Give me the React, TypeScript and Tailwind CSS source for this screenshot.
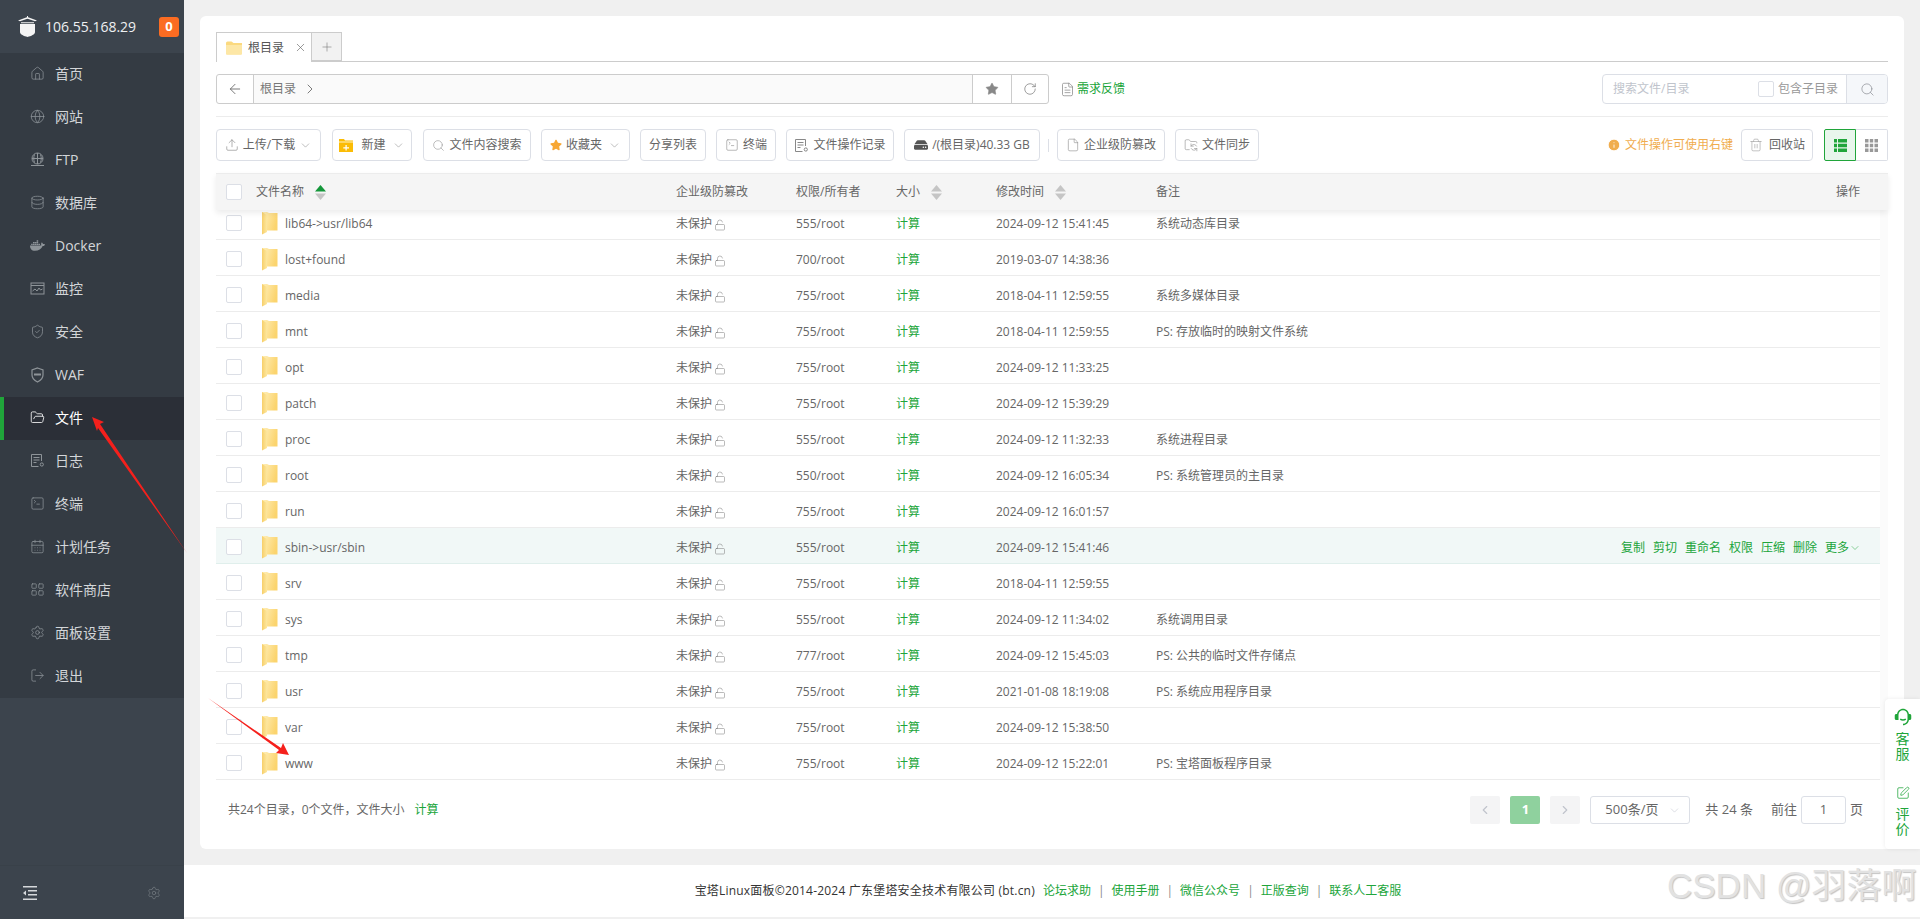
import React from "react";
import {
  ArrowLeft, ChevronRight, ChevronLeft, ChevronDown, Database, File, FileText, FolderOpen, Globe, Home, LayoutGrid, LogOut, Plus, RotateCw,
  Search, Settings, ShieldCheck, Star, Trash2, Upload, X, SquarePen, Info, SquareTerminal, CalendarDays, LockOpen, FolderSync,
} from "lucide-react";
import { FaDocker, FaHdd, FaStar } from "react-icons/fa";
import { RiCustomerService2Fill } from "react-icons/ri";

const font = { fontFamily: '"Open Sans","Noto Sans CJK SC",sans-serif' };

function MonitorIcon() {
  return (
    <svg width="15" height="15" viewBox="0 0 15 15" fill="none" stroke="currentColor" strokeWidth="1">
      <rect x="1" y="2" width="13" height="11" />
      <path d="M1 4.5h13M2.5 10l2.5-2 2 2 2-3 1.500 2 2-1" />
    </svg>
  );
}
function FtpIcon() {
  return (
    <svg width="15" height="15" viewBox="0 0 15 15" fill="none" stroke="currentColor" strokeWidth="1">
      <circle cx="7.500" cy="6.500" r="5.500" />
      <path d="M2 6.500h11M7.500 1v11M4.500 2.500c-1 2.500-1 5.500 0 8M10.500 2.500c1 2.500 1 5.500 0 8M1 13.500h13" />
    </svg>
  );
}
function WafIcon() {
  return (
    <svg width="15" height="16" viewBox="0 0 15 16" fill="none" stroke="currentColor" strokeWidth="1.200">
      <path d="M7.500 1l5.500 2v5c0 3.500-2.500 5.500-5.500 7-3-1.500-5.500-3.500-5.500-7V3z" />
      <path d="M4 6.500h7v2H4z" fill="currentColor" stroke="none" />
    </svg>
  );
}
function LogIcon() {
  return (
    <svg width="15" height="15" viewBox="0 0 15 15" fill="none" stroke="currentColor" strokeWidth="1">
      <path d="M11.500 8V1.500h-10v12h7M3.500 4.500h6M3.500 7h6M3.500 9.500h3" />
      <circle cx="11.800" cy="11.500" r="1.600" />
    </svg>
  );
}
function CollapseIcon() {
  return (
    <svg width="14" height="14" viewBox="0 0 14 14" fill="#d5d8db">
      <path d="M0 0h14v1.500H0zM5 4h9v1.500H5zM5 8h9v1.500H5zM0 12.500h14V14H0zM3 4.500v5L0 7z" />
    </svg>
  );
}
function LogoIcon() {
  return (
    <svg width="19" height="21" viewBox="0 0 19 21" fill="#f4f4f4">
      <path d="M2 8h15v8c0 2.500-4 4-7.500 5C6 20 2 18.500 2 16z" />
      <path d="M0 4.500L9.500 1 19 4.500l-2 .7-7.500-2.500L2 5.200zM3 6.200h13v1H3zM9 0h1v2H9z" />
    </svg>
  );
}
function FolderTall() {
  return (
    <svg width="17" height="24" viewBox="0 0 17 24" className="shrink-0 -mt-[3px]">
      <defs>
        <linearGradient id="fa" x1="0" y1="0" x2="1" y2="0.3">
          <stop offset="0" stopColor="#fff0bd" />
          <stop offset="1" stopColor="#fbd46e" />
        </linearGradient>
        <linearGradient id="fb" x1="0" y1="0" x2="1" y2="0">
          <stop offset="0" stopColor="#f7cf6a" />
          <stop offset="1" stopColor="#fde79f" />
        </linearGradient>
      </defs>
      <path d="M1 1h5l2 1h8.500v17.500H1z" fill="url(#fa)" />
      <path d="M1 1l5 3v17l-5 2.500z" fill="url(#fb)" />
    </svg>
  );
}
function FolderFlat() {
  return (
    <svg width="16" height="14" viewBox="0 0 16 14">
      <path d="M0 2a1.500 1.500 0 0 1 1.500-1.500h4L7.500 2H16v10.500a1 1 0 0 1-1 1H1a1 1 0 0 1-1-1z" fill="#fbd97f" />
      <path d="M0 4h16v8.500a1 1 0 0 1-1 1H1a1 1 0 0 1-1-1z" fill="#fde7a6" />
    </svg>
  );
}
function NewFolderIcon() {
  return (
    <svg width="14" height="13" viewBox="0 0 14 13">
      <path d="M0 0h5l1 1.500h8V13H0z" fill="#fbbc05" />
      <path d="M0 2.500h14v1H0z" fill="#fff3c4" />
      <path d="M6.500 6h1.200v2.200H10v1.200H7.700v2.200H6.500V9.400H4.300V8.200h2.200z" fill="#fff" />
    </svg>
  );
}
function Sort({ active }: { active?: boolean }) {
  return (
    <svg width="11" height="15" viewBox="0 0 11 15" className="shrink-0">
      <path d="M5.500 0L11 6.500H0z" fill={active ? "#14973a" : "#c5c5c5"} />
      <path d="M5.500 15L11 8.500H0z" fill="#c5c5c5" />
    </svg>
  );
}
function ListViewIcon({ color }: { color: string }) {
  return (
    <svg width="13" height="13" viewBox="0 0 13 13" fill={color}>
      <path d="M0 0h3v3.500H0zM4 0h9v3.500H4zM0 4.800h3v3.400H0zM4 4.800h9v3.400H4zM0 9.500h3V13H0zM4 9.500h9V13H4z" />
    </svg>
  );
}
function GridViewIcon() {
  return (
    <svg width="13" height="13" viewBox="0 0 13 13" fill="#999">
      <path d="M0 0h3.500v3.500H0zM4.800 0h3.400v3.500H4.800zM9.500 0H13v3.500H9.500zM0 4.800h3.500v3.400H0zM4.800 4.800h3.400v3.400H4.800zM9.500 4.800H13v3.400H9.500zM0 9.500h3.500V13H0zM4.800 9.500h3.400V13H4.800zM9.500 9.500H13V13H9.500z" />
    </svg>
  );
}

const menu: { label: string; icon: React.ReactNode; active?: boolean }[] = [
  { label: "首页", icon: <Home size={15} strokeWidth={1.2} /> },
  { label: "网站", icon: <Globe size={15} strokeWidth={1.2} /> },
  { label: "FTP", icon: <FtpIcon /> },
  { label: "数据库", icon: <Database size={15} strokeWidth={1.2} /> },
  { label: "Docker", icon: <FaDocker size={15} /> },
  { label: "监控", icon: <MonitorIcon /> },
  { label: "安全", icon: <ShieldCheck size={15} strokeWidth={1.2} /> },
  { label: "WAF", icon: <WafIcon /> },
  { label: "文件", icon: <FolderOpen size={15} strokeWidth={1.3} />, active: true },
  { label: "日志", icon: <LogIcon /> },
  { label: "终端", icon: <SquareTerminal size={15} strokeWidth={1.2} /> },
  { label: "计划任务", icon: <CalendarDays size={15} strokeWidth={1.2} /> },
  { label: "软件商店", icon: <LayoutGrid size={15} strokeWidth={1.2} /> },
  { label: "面板设置", icon: <Settings size={15} strokeWidth={1.2} /> },
  { label: "退出", icon: <LogOut size={15} strokeWidth={1.2} /> },
];

const rows = [
  ["lib64->usr/lib64", "555/root", "2024-09-12 15:41:45", "系统动态库目录"],
  ["lost+found", "700/root", "2019-03-07 14:38:36", ""],
  ["media", "755/root", "2018-04-11 12:59:55", "系统多媒体目录"],
  ["mnt", "755/root", "2018-04-11 12:59:55", "PS: 存放临时的映射文件系统"],
  ["opt", "755/root", "2024-09-12 11:33:25", ""],
  ["patch", "755/root", "2024-09-12 15:39:29", ""],
  ["proc", "555/root", "2024-09-12 11:32:33", "系统进程目录"],
  ["root", "550/root", "2024-09-12 16:05:34", "PS: 系统管理员的主目录"],
  ["run", "755/root", "2024-09-12 16:01:57", ""],
  ["sbin->usr/sbin", "555/root", "2024-09-12 15:41:46", ""],
  ["srv", "755/root", "2018-04-11 12:59:55", ""],
  ["sys", "555/root", "2024-09-12 11:34:02", "系统调用目录"],
  ["tmp", "777/root", "2024-09-12 15:45:03", "PS: 公共的临时文件存储点"],
  ["usr", "755/root", "2021-01-08 18:19:08", "PS: 系统应用程序目录"],
  ["var", "755/root", "2024-09-12 15:38:50", ""],
  ["www", "755/root", "2024-09-12 15:22:01", "PS: 宝塔面板程序目录"],
];

function Check() {
  return <span className="block w-[16px] h-[16px] rounded-[2px] border border-[#dcdfe6] bg-white shrink-0" />;
}

function Btn({ w, children }: { w: string; children: React.ReactNode }) {
  return (
    <div className={"h-[32px] shrink-0 flex items-center justify-center gap-[4px] rounded-[4px] border border-[#dcdfe6] bg-white text-[12px] text-[#666] " + w}>
      {children}
    </div>
  );
}

export default function App() {
  return (
    <div className="relative w-[1920px] h-[919px] overflow-hidden flex bg-[#f0f0f0]" style={font}>
      <aside className="w-[184px] h-full shrink-0 flex flex-col bg-[#3c444d]">
        <div className="h-[53px] flex items-center pl-[18px] pr-[5px]">
          <LogoIcon />
          <span className="ml-[8px] text-[14px] text-[#eef0f1]">106.55.168.29</span>
          <span className="ml-auto w-[20px] h-[20px] rounded-[3px] bg-[#fb6c22] text-white font-bold text-[13px] flex items-center justify-center">0</span>
        </div>
        <nav className="bg-[#343b43]">
          {menu.map((m) => (
            <div key={m.label} className={m.active ? "h-[43px] pb-[2px] flex items-center gap-[10px] pl-[26px] border-l-4 border-[#20a53a] bg-[#2b2f37] text-white text-[14px]" : "h-[43px] pb-[2px] flex items-center gap-[10px] pl-[30px] text-[#d3d6d9] text-[14px]"}>
              <span className={m.active ? "w-[15px] flex justify-center text-white" : "w-[15px] flex justify-center text-[#8e9499]"}>{m.icon}</span>
              <span>{m.label}</span>
            </div>
          ))}
        </nav>
        <div className="mt-auto h-[54px] flex items-center justify-between pl-[23px] pr-[23px] border-t border-[#394149]">
          <CollapseIcon />
          <Settings size={14} strokeWidth={1.2} className="text-[#767c82]" />
        </div>
      </aside>

      <main className="flex-1 flex flex-col min-w-0">
        <div className="mx-[16px] mt-[16px] h-[833px] rounded-[6px] bg-white px-[16px] pt-[16px] flex flex-col">
          <div className="h-[30px] border-b border-[#cccccc] flex shrink-0">
            <div className="w-[96px] h-[30px] border border-b-0 border-[#cccccc] bg-white flex items-center pl-[9px] text-[12px] text-[#555]">
              <FolderFlat />
              <span className="ml-[6px]">根目录</span>
              <X size={13} strokeWidth={1.2} className="ml-[10px] text-[#666]" />
            </div>
            <div className="w-[30px] h-[29px] border border-l-0 border-[#cccccc] bg-[#f2f2f2] flex items-center justify-center text-[#777]">
              <Plus size={14} strokeWidth={1} />
            </div>
          </div>

          <div className="mt-[12px] h-[30px] flex shrink-0 items-center">
            <div className="w-[833px] h-[30px] flex rounded-[3px] border border-[#cccccc] overflow-hidden">
              <div className="w-[37px] flex items-center justify-center border-r border-[#cccccc] text-[#666]"><ArrowLeft size={16} strokeWidth={1.3} /></div>
              <div className="flex-1 bg-[#fafafa] flex items-center pl-[6px] text-[12px] text-[#777]">
                <span>根目录</span>
                <ChevronRight size={16} strokeWidth={1.3} className="ml-[6px] text-[#666]" />
              </div>
              <div className="w-[39px] flex items-center justify-center border-l border-[#cccccc] text-[#888]"><Star size={14} fill="#888" strokeWidth={1} /></div>
              <div className="w-[37px] flex items-center justify-center border-l border-[#cccccc] text-[#777]"><RotateCw size={14} strokeWidth={1.2} /></div>
            </div>
            <FileText size={15} strokeWidth={1.2} className="ml-[11px] text-[#888]" />
            <span className="ml-[2px] text-[12px] text-[#20a53a]">需求反馈</span>
            <div className="ml-auto w-[286px] h-[30px] flex rounded-[4px] border border-[#dcdfe6] overflow-hidden">
              <div className="flex-1 flex items-center pl-[10px] text-[12px] text-[#c0c4cc]">
                <span>搜索文件/目录</span>
                <span className="ml-auto"><Check /></span>
                <span className="ml-[4px] mr-[8px] text-[#999]">包含子目录</span>
              </div>
              <div className="w-[41px] bg-[#f5f7fa] border-l border-[#dcdfe6] flex items-center justify-center text-[#909399]"><Search size={15} strokeWidth={1.2} /></div>
            </div>
          </div>

          <div className="mt-[12px] border-t border-[#ececec] shrink-0" />

          <div className="mt-[12px] h-[32px] flex items-center shrink-0">
            <Btn w="w-[105px]"><Upload size={14} strokeWidth={1.1} className="text-[#888]" /><span>上传/下载</span><ChevronDown size={13} strokeWidth={1} className="text-[#888]" /></Btn>
            <div className="ml-[11px]"><Btn w="w-[80px]"><NewFolderIcon /><span className="ml-[4px]">新建</span><ChevronDown size={13} strokeWidth={1} className="ml-[2px] text-[#888]" /></Btn></div>
            <div className="ml-[11px]"><Btn w="w-[108px]"><Search size={13} strokeWidth={1} className="text-[#888]" /><span>文件内容搜索</span></Btn></div>
            <div className="ml-[10px]"><Btn w="w-[89px]"><FaStar size={12} className="text-[#f7a733]" /><span>收藏夹</span><ChevronDown size={13} strokeWidth={1} className="ml-[2px] text-[#888]" /></Btn></div>
            <div className="ml-[10px]"><Btn w="w-[66px]"><span>分享列表</span></Btn></div>
            <div className="ml-[10px]"><Btn w="w-[60px]"><SquareTerminal size={14} strokeWidth={1} className="text-[#888]" /><span>终端</span></Btn></div>
            <div className="ml-[10px]"><Btn w="w-[108px]"><span className="text-[#888]"><LogIcon /></span><span>文件操作记录</span></Btn></div>
            <div className="ml-[10px]"><Btn w="w-[136px]"><FaHdd size={14} className="text-[#555]" /><span>/(根目录)40.33 GB</span></Btn></div>
            <div className="ml-[8px] mr-[8px] w-px h-[13px] bg-[#dcdfe6]" />
            <Btn w="w-[108px]"><File size={14} strokeWidth={1} className="text-[#888]" /><span>企业级防篡改</span></Btn>
            <div className="ml-[10px]"><Btn w="w-[84px]"><FolderSync size={14} strokeWidth={1} className="text-[#888]" /><span>文件同步</span></Btn></div>
            <div className="ml-auto flex items-center gap-[4px] text-[12px] text-[#f0ad4e]">
              <Info size={14} fill="#f0ad4e" stroke="#fff" strokeWidth={1.5} />
              <span>文件操作可使用右键</span>
            </div>
            <div className="ml-[8px]"><Btn w="w-[72px]"><Trash2 size={14} strokeWidth={1} className="text-[#999]" /><span className="ml-[2px]">回收站</span></Btn></div>
            <div className="ml-[11px] w-[32px] h-[32px] flex items-center justify-center rounded-l-[2px] border border-[#20a53a] bg-[#e8f6ec]"><ListViewIcon color="#20a53a" /></div>
            <div className="w-[32px] h-[32px] flex items-center justify-center rounded-r-[2px] border border-l-0 border-[#dcdfe6]"><GridViewIcon /></div>
          </div>

          <div className="mt-[12px] relative z-10 h-[37px] shrink-0 bg-[#f5f5f5] border-t border-[#ececec] shadow-[0_3px_6px_rgba(0,0,0,0.08)] grid grid-cols-[45px_415px_120px_100px_100px_160px_1fr] items-center text-[12px] text-[#666]">
            <div className="pl-[10px]"><Check /></div>
            <div className="-ml-[5px] flex items-center gap-[11px]"><span>文件名称</span><Sort active /></div>
            <div>企业级防篡改</div>
            <div>权限/所有者</div>
            <div className="flex items-center gap-[11px]"><span>大小</span><Sort /></div>
            <div className="flex items-center gap-[11px]"><span>修改时间</span><Sort /></div>
            <div className="flex justify-between pr-[28px]"><span>备注</span><span>操作</span></div>
          </div>

          <div className="h-[570px] shrink-0 overflow-hidden bg-[#fbfbfb]">
            <div className="w-[1664px] -mt-[6px] bg-white">
              {rows.map((r) => {
                const hover = r[0].startsWith("sbin");
                return (
                  <div key={r[0]} className={hover ? "h-[36px] pt-[5px] border-b border-[#e0efec] bg-[#f1f8f7] grid grid-cols-[45px_415px_120px_100px_100px_160px_1fr] items-center text-[12px] text-[#666]" : "h-[36px] pt-[5px] border-b border-[#ececec] grid grid-cols-[45px_415px_120px_100px_100px_160px_1fr] items-center text-[12px] text-[#666]"}>
                    <div className="pl-[10px] -mt-[3px]"><Check /></div>
                    <div className="flex items-center gap-[7px]"><FolderTall /><span>{r[0]}</span></div>
                    <div className="flex items-center gap-[2px]"><span>未保护</span><LockOpen size={12} strokeWidth={1} className="text-[#777] mt-[2px]" /></div>
                    <div>{r[1]}</div>
                    <div className="text-[#20a53a]">计算</div>
                    <div>{r[2]}</div>
                    <div className="flex justify-between pr-[19px]">
                      <span>{r[3]}</span>
                      {hover && (
                        <span className="flex items-center gap-[8px] text-[#20a53a]">
                          <span>复制</span><span>剪切</span><span>重命名</span><span>权限</span><span>压缩</span><span>删除</span>
                          <span className="flex items-center">更多<ChevronDown size={12} strokeWidth={1} /></span>
                        </span>
                      )}
                    </div>
                  </div>
                );
              })}
            </div>
          </div>

          <div className="flex items-center h-[60px] shrink-0 text-[12px] text-[#666] pl-[12px] pr-[25px]">
            <div>共24个目录，0个文件，文件大小</div>
            <div className="ml-[10px] text-[#20a53a]">计算</div>
            <div className="ml-auto flex items-center">
              <div className="w-[30px] h-[28px] rounded-[2px] bg-[#f4f4f5] flex items-center justify-center text-[#c0c4cc]"><ChevronLeft size={14} strokeWidth={2} /></div>
              <div className="ml-[10px] w-[30px] h-[28px] rounded-[2px] bg-[#8fd19e] flex items-center justify-center text-white font-bold text-[13px]">1</div>
              <div className="ml-[10px] w-[30px] h-[28px] rounded-[2px] bg-[#f4f4f5] flex items-center justify-center text-[#c0c4cc]"><ChevronRight size={14} strokeWidth={2} /></div>
              <div className="ml-[10px] w-[100px] h-[28px] rounded-[3px] border border-[#dcdfe6] flex items-center pl-[14px] text-[13px]">
                <span>500条/页</span>
                <ChevronDown size={13} strokeWidth={1} className="ml-auto mr-[8px] text-[#c0c4cc]" />
              </div>
              <span className="ml-[15px] text-[13px]">共 24 条</span>
              <span className="ml-[18px] text-[13px]">前往</span>
              <div className="ml-[4px] w-[45px] h-[28px] rounded-[3px] border border-[#dcdfe6] flex items-center justify-center text-[13px]">1</div>
              <span className="ml-[4px] text-[13px]">页</span>
            </div>
          </div>
        </div>

        <footer className="mt-[16px] h-[52px] bg-white flex items-center justify-center pr-[8px] text-[12px] text-[#333]">
          <span className="tracking-[0.2px]">宝塔Linux面板©2014-2024 广东堡塔安全技术有限公司 (bt.cn)</span>
          <span className="ml-[8px] text-[#20a53a]">论坛求助</span>
          <span className="mx-[7px] text-[#888]">|</span>
          <span className="text-[#20a53a]">使用手册</span>
          <span className="mx-[7px] text-[#888]">|</span>
          <span className="text-[#20a53a]">微信公众号</span>
          <span className="mx-[7px] text-[#888]">|</span>
          <span className="text-[#20a53a]">正版查询</span>
          <span className="mx-[7px] text-[#888]">|</span>
          <span className="text-[#20a53a]">联系人工客服</span>
        </footer>
      </main>

      <div className="absolute right-0 top-[699px] w-[35px] h-[150px] rounded-l-[4px] bg-white shadow-[0_0_4px_rgba(0,0,0,0.08)] flex flex-col items-center pt-[9px] text-[#20a53a] text-[14px] leading-[15px]">
        <RiCustomerService2Fill size={18} />
        <span className="mt-[5px]">客</span>
        <span>服</span>
        <SquarePen size={14} strokeWidth={1.3} className="mt-[25px]" />
        <span className="mt-[6px]">评</span>
        <span>价</span>
      </div>

      <div className="absolute left-[1667px] top-[866px] text-[35px] leading-[40px] text-[#e2e2e2] whitespace-nowrap" style={{ fontFamily: '"Liberation Sans","Noto Sans CJK SC",sans-serif', textShadow: "1px 1px 1px #c4c4c4" }}>CSDN @羽落啊</div>

      <svg className="absolute inset-0 pointer-events-none" width="1920" height="919">
        <polygon points="92,417 104,422 100,424 187,553 98,428 97,431" fill="#f5201c" />
        <polygon points="208,698 281,748 283,743 289,755 276,753 279,750" fill="#f5201c" />
      </svg>
    </div>
  );
}
